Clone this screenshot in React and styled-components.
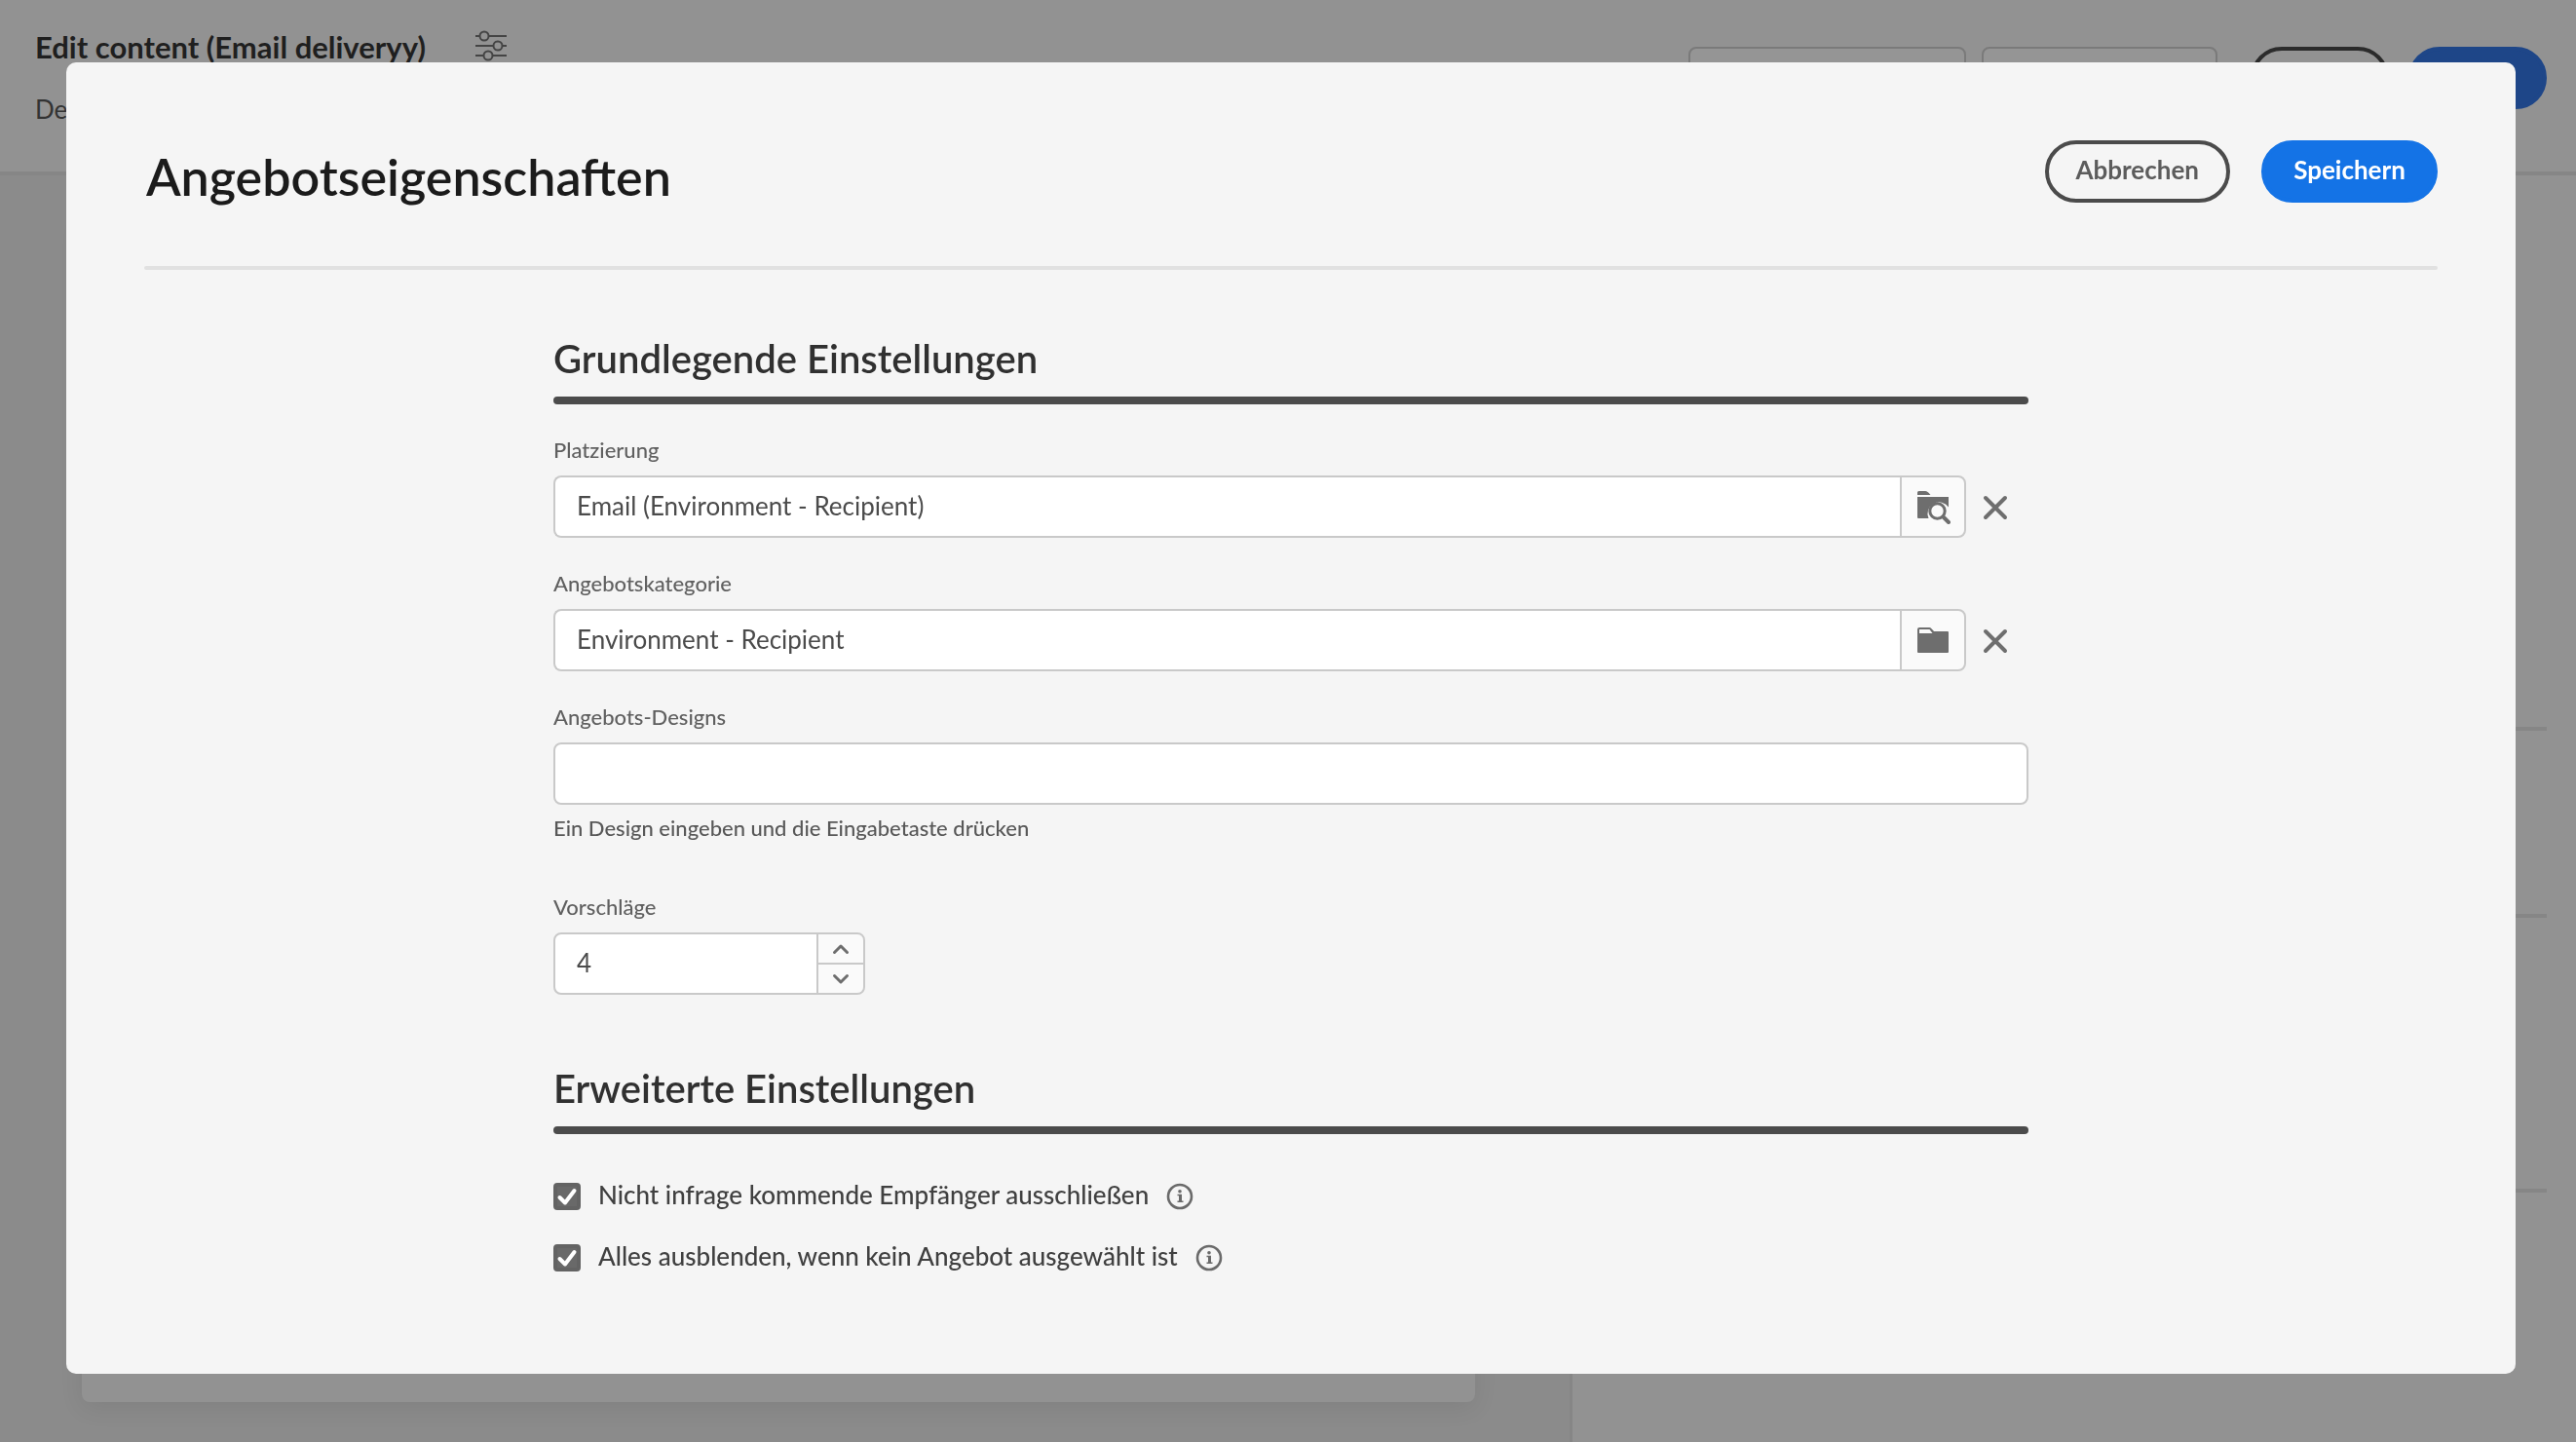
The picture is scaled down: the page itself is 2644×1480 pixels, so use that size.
import React, { useState } from "react";
import styled, { createGlobalStyle, css } from "styled-components";

const GlobalStyle = createGlobalStyle`
  *, *::before, *::after { box-sizing: border-box; }
  body {
    margin: 0;
    background: #8b8b8b;
    color: #3f3f3f;
    font-family: Lato, "Noto Sans", sans-serif;
    font-size: 26px;
    line-height: 32px;
  }
  button, input { font: inherit; color: inherit; margin: 0; }
`;

/* ---------- page behind the dialog ---------- */

const Page = styled.div`
  display: flex;
  flex-direction: column;
  min-height: 100vh;
`;

const PageHeader = styled.header`
  display: flex;
  justify-content: space-between;
  height: 180px;
  padding: 28px 30px 0 36px;
  background: #929292;
  border-bottom: 4px solid #868686;
`;

const PageHeading = styled.div`
  display: flex;
  flex-direction: column;
  gap: 28px;
  color: #333;
`;

const PageTitleRow = styled.div`
  display: flex;
  gap: 50px;
`;

const PageTitle = styled.h1`
  margin: 0;
  font-size: 31px;
  line-height: 40px;
  font-weight: 700;
  color: #1f1f1f;
`;

const PageSubtitle = styled.p`
  margin: 0;
`;

const PageActions = styled.div`
  display: flex;
  gap: 16px;
  padding-top: 20px;
`;

const ToolButton = styled.button`
  width: ${(p) => p.$width}px;
  height: 64px;
  background: #959595;
  border: 2px solid #7a7a7a;
  border-radius: 8px;
`;

const PagePill = styled.button`
  width: 142px;
  height: 64px;
  margin: ${(p) => (p.$primary ? "0" : "0 4px 0 18px")};
  background: ${(p) => (p.$primary ? "#1e4688" : "transparent")};
  border: 4px solid ${(p) => (p.$primary ? "#1e4688" : "#2b2b2b")};
  border-radius: 32px;
`;

const PageBody = styled.div`
  flex: 1;
  display: grid;
  grid-template-columns: 1611fr 1033fr;
`;

const Canvas = styled.div`
  display: flex;
  padding: 41px 97px 41px 84px;
`;

const CanvasCard = styled.div`
  flex: 1;
  background: #929292;
  border-radius: 8px;
  box-shadow: 0 6px 24px rgba(0, 0, 0, 0.08);
`;

const SidePanel = styled.aside`
  padding: 0 30px;
  background: #929292;
  border-left: 3px solid #868686;
`;

const SideSection = styled.div`
  height: ${(p) => p.$height}px;
  border-bottom: 4px solid #868686;
`;

/* ---------- dialog ---------- */

const Overlay = styled.div`
  position: fixed;
  inset: 0;
  display: flex;
  padding: 64px 62px 70px 68px;
`;

const Dialog = styled.section`
  flex: 1;
  padding: 80px 80px 64px;
  background: #f5f5f5;
  border-radius: 10px;
  overflow: auto;
`;

const DialogHeader = styled.header`
  display: flex;
  align-items: flex-start;
  justify-content: space-between;
  padding-bottom: 55px;
`;

const DialogTitle = styled.h2`
  margin: 0;
  padding-left: 2px;
  font-size: 52px;
  line-height: 74px;
  font-weight: 600;
  color: #1b1b1b;
`;

const DialogActions = styled.div`
  display: flex;
  gap: 32px;
`;

const PillButton = styled.button`
  min-width: 181px;
  height: 64px;
  padding: 0 28px 4px;
  border: 4px solid #4b4b4b;
  border-radius: 32px;
  background: transparent;
  color: #5c5c5c;
  font-weight: 700;
  cursor: pointer;
  ${(p) =>
    p.$primary &&
    css`
      border-color: #1473e6;
      background: #1473e6;
      color: #fff;
    `}
`;

const Divider = styled.hr`
  height: 4px;
  margin: 0;
  border: 0;
  border-radius: 2px;
  background: #e1e1e1;
`;

const Form = styled.form`
  display: flex;
  flex-direction: column;
  gap: 72px;
  max-width: 1514px;
  margin: 0 auto;
  padding-top: 67px;
`;

const SectionTitle = styled.h3`
  margin: 0 0 15px;
  font-size: 40px;
  line-height: 48px;
  font-weight: 600;
  color: #303030;
`;

const SectionRule = styled.hr`
  height: 8px;
  margin: 0;
  border: 0;
  border-radius: 4px;
  background: #4b4b4b;
`;

const Fields = styled.div`
  display: flex;
  flex-direction: column;
  gap: 31px;
  padding-top: ${(p) => p.$top}px;
`;

const Field = styled.div`
  display: flex;
  flex-direction: column;
  padding-top: ${(p) => (p.$apart ? 18 : 0)}px;
`;

const Label = styled.label`
  align-self: flex-start;
  padding-bottom: 10px;
  font-size: 22px;
  font-weight: 500;
  color: #606060;
`;

const Help = styled.p`
  margin: 8px 0 0;
  font-size: 22px;
  font-weight: 500;
  color: #585858;
`;

const Control = styled.div`
  display: flex;
  height: 64px;
`;

const TextInput = styled.input`
  flex: 1;
  min-width: 0;
  height: 64px;
  padding: 0 20px 3px 22px;
  border: 2px solid #c9c9c9;
  border-right-width: ${(p) => (p.$joined ? 0 : 2)}px;
  border-radius: ${(p) => (p.$joined ? "8px 0 0 8px" : "8px")};
  background: #fff;
  color: #4b4b4b;
  outline: none;
`;

const PickerButton = styled.button`
  display: grid;
  place-items: center;
  width: 68px;
  padding: 0;
  border: 2px solid #c9c9c9;
  border-radius: 0 8px 8px 0;
  background: #fafafa;
  cursor: pointer;
`;

const ClearButton = styled.button`
  display: grid;
  place-items: center;
  width: 60px;
  margin-right: 4px;
  padding: 0;
  border: 0;
  background: none;
  cursor: pointer;
`;

const NumberBox = styled.div`
  display: flex;
  width: 320px;
  height: 64px;
  border: 2px solid #c9c9c9;
  border-radius: 8px;
  background: #fff;
  overflow: hidden;
`;

const NumberInput = styled.input`
  flex: 1;
  min-width: 0;
  padding: 0 20px 3px 22px;
  border: 0;
  background: none;
  color: #4b4b4b;
  outline: none;
  appearance: textfield;
  &::-webkit-inner-spin-button { appearance: none; }
`;

const Steps = styled.div`
  display: grid;
  grid-template-rows: 1fr 1fr;
  gap: 2px;
  width: 48px;
  padding-left: 2px;
  background: #c9c9c9;
`;

const StepButton = styled.button`
  display: grid;
  place-items: center;
  padding: 0;
  border: 0;
  background: #fafafa;
  cursor: pointer;
`;

const CheckRow = styled.div`
  display: flex;
  align-items: flex-start;
  height: 32px;
`;

const CheckLabel = styled.label`
  display: flex;
  align-items: flex-start;
  gap: 18px;
  font-weight: 500;
  color: #404040;
  cursor: pointer;
`;

const CheckBox = styled.span`
  display: grid;
  width: 28px;
  height: 28px;
  margin-top: 4px;
  > * { grid-area: 1 / 1; }
  svg { pointer-events: none; }
`;

const CheckInput = styled.input`
  appearance: none;
  width: 28px;
  height: 28px;
  border: 4px solid #636363;
  border-radius: 4px;
  background: #fff;
  &:checked { background: #696969; }
`;

const InfoButton = styled.button`
  display: grid;
  margin: 4px 0 0 18px;
  padding: 0;
  border: 0;
  background: none;
  cursor: pointer;
`;

/* ---------- icons ---------- */

const SlidersIcon = () => (
  <svg width="34" height="40" viewBox="0 0 34 40" fill="none" stroke="#444" strokeWidth="2">
    <path d="M1 9h4M15 9h18M1 19h18M29 19h4M1 29h8M19 29h14" />
    <circle cx="10" cy="9" r="4.500" />
    <circle cx="24" cy="19" r="4.500" />
    <circle cx="14" cy="29" r="4.500" />
  </svg>
);

const FolderSearchIcon = () => (
  <svg width="36" height="36" viewBox="-1 -1 36 36" fill="#6e6e6e">
    <path d="M1 5V2.500A1.500 1.500 0 0 1 2.500 1H9C11 1 12 2 14.500 5Z" />
    <path d="M1 7H33V17.500A11.800 11.800 0 0 0 12.500 29H2A1 1 0 0 1 1 28Z" />
    <circle cx="21.500" cy="21.500" r="7.700" fill="none" stroke="#6e6e6e" strokeWidth="3" />
    <path d="M27.500 27.500L33 33" stroke="#6e6e6e" strokeWidth="4" strokeLinecap="round" />
  </svg>
);

const FolderIcon = () => (
  <svg width="36" height="36" viewBox="-1 0 36 36" fill="#6e6e6e">
    <path
      fillRule="evenodd"
      d="M3 5H13C14.500 5 15 5.500 18 9H32A1 1 0 0 1 33 10V30A1 1 0 0 1 32 31H2A1 1 0 0 1 1 30V7A2 2 0 0 1 3 5ZM3 7V11H16.500L13.500 7Z"
    />
  </svg>
);

const CrossIcon = () => (
  <svg width="28" height="28" viewBox="0 0 28 28" stroke="#6e6e6e" strokeWidth="4" strokeLinecap="round">
    <path d="M4 5L24 25M24 5L4 25" />
  </svg>
);

const ChevronIcon = ({ down }) => (
  <svg
    width="20"
    height="14"
    viewBox="0 0 20 14"
    fill="none"
    stroke="#6e6e6e"
    strokeWidth="3"
    strokeLinecap="round"
    strokeLinejoin="round"
  >
    <path d={down ? "M3.500 3.500L10 10L16.500 3.500" : "M3.500 10.500L10 4L16.500 10.500"} />
  </svg>
);

const TickIcon = () => (
  <svg width="28" height="28" viewBox="0 0 28 28" fill="none" stroke="#fff" strokeWidth="4" strokeLinecap="round" strokeLinejoin="round">
    <path d="M6.500 15L12 20.500L21.500 8" />
  </svg>
);

const InfoIcon = () => (
  <svg width="28" height="28" viewBox="0 0 28 28" fill="none" stroke="#6a6a6a">
    <circle cx="14" cy="14" r="12" strokeWidth="2.600" />
    <path d="M14.500 12.500V19" strokeWidth="3" />
    <path d="M11.500 12.500H16M11.500 19.200H17.500" strokeWidth="1.600" />
    <circle cx="14" cy="8.800" r="1.800" fill="#6a6a6a" stroke="none" />
  </svg>
);

/* ---------- parts ---------- */

function PickerField({ id, label, initial, icon, pickLabel }) {
  const [value, setValue] = useState(initial);
  return (
    <Field>
      <Label htmlFor={id}>{label}</Label>
      <Control>
        <TextInput id={id} $joined value={value} onChange={(e) => setValue(e.target.value)} />
        <PickerButton type="button" aria-label={pickLabel}>{icon}</PickerButton>
        <ClearButton type="button" aria-label="Löschen" onClick={() => setValue("")}>
          <CrossIcon />
        </ClearButton>
      </Control>
    </Field>
  );
}

function CheckField({ id, label }) {
  const [checked, setChecked] = useState(true);
  return (
    <CheckRow>
      <CheckLabel htmlFor={id}>
        <CheckBox>
          <CheckInput id={id} type="checkbox" checked={checked} onChange={(e) => setChecked(e.target.checked)} />
          {checked && <TickIcon />}
        </CheckBox>
        {label}
      </CheckLabel>
      <InfoButton type="button" aria-label="Info"><InfoIcon /></InfoButton>
    </CheckRow>
  );
}

function Backdrop() {
  return (
    <Page inert>
      <PageHeader>
        <PageHeading>
          <PageTitleRow>
            <PageTitle>Edit content (Email deliveryy)</PageTitle>
            <SlidersIcon />
          </PageTitleRow>
          <PageSubtitle>De</PageSubtitle>
        </PageHeading>
        <PageActions>
          <ToolButton type="button" $width={285} />
          <ToolButton type="button" $width={242} />
          <PagePill type="button" />
          <PagePill type="button" $primary />
        </PageActions>
      </PageHeader>
      <PageBody>
        <Canvas>
          <CanvasCard />
        </Canvas>
        <SidePanel>
          <SideSection $height={570} />
          <SideSection $height={192} />
          <SideSection $height={282} />
        </SidePanel>
      </PageBody>
    </Page>
  );
}

export default function App() {
  const [designs, setDesigns] = useState("");
  const [count, setCount] = useState(4);
  return (
    <>
      <GlobalStyle />
      <Backdrop />
      <Overlay>
        <Dialog role="dialog" aria-modal="true" aria-labelledby="dialog-title">
          <DialogHeader>
            <DialogTitle id="dialog-title">Angebotseigenschaften</DialogTitle>
            <DialogActions>
              <PillButton type="button">Abbrechen</PillButton>
              <PillButton type="submit" form="offer-form" $primary>Speichern</PillButton>
            </DialogActions>
          </DialogHeader>
          <Divider />
          <Form id="offer-form" onSubmit={(e) => e.preventDefault()}>
            <section>
              <SectionTitle>Grundlegende Einstellungen</SectionTitle>
              <SectionRule />
              <Fields $top={31}>
                <PickerField
                  id="placement"
                  label="Platzierung"
                  initial="Email (Environment - Recipient)"
                  icon={<FolderSearchIcon />}
                  pickLabel="Platzierung suchen"
                />
                <PickerField
                  id="category"
                  label="Angebotskategorie"
                  initial="Environment - Recipient"
                  icon={<FolderIcon />}
                  pickLabel="Ordner öffnen"
                />
                <Field>
                  <Label htmlFor="designs">Angebots-Designs</Label>
                  <Control>
                    <TextInput
                      id="designs"
                      aria-describedby="designs-help"
                      value={designs}
                      onChange={(e) => setDesigns(e.target.value)}
                    />
                  </Control>
                  <Help id="designs-help">Ein Design eingeben und die Eingabetaste drücken</Help>
                </Field>
                <Field $apart>
                  <Label htmlFor="count">Vorschläge</Label>
                  <NumberBox>
                    <NumberInput
                      id="count"
                      type="number"
                      value={count}
                      onChange={(e) => setCount(Number(e.target.value))}
                    />
                    <Steps>
                      <StepButton type="button" aria-label="Erhöhen" onClick={() => setCount(count + 1)}>
                        <ChevronIcon />
                      </StepButton>
                      <StepButton type="button" aria-label="Verringern" onClick={() => setCount(count - 1)}>
                        <ChevronIcon down />
                      </StepButton>
                    </Steps>
                  </NumberBox>
                </Field>
              </Fields>
            </section>
            <section>
              <SectionTitle>Erweiterte Einstellungen</SectionTitle>
              <SectionRule />
              <Fields $top={46}>
                <CheckField id="exclude" label="Nicht infrage kommende Empfänger ausschließen" />
                <CheckField id="hide" label="Alles ausblenden, wenn kein Angebot ausgewählt ist" />
              </Fields>
            </section>
          </Form>
        </Dialog>
      </Overlay>
    </>
  );
}
